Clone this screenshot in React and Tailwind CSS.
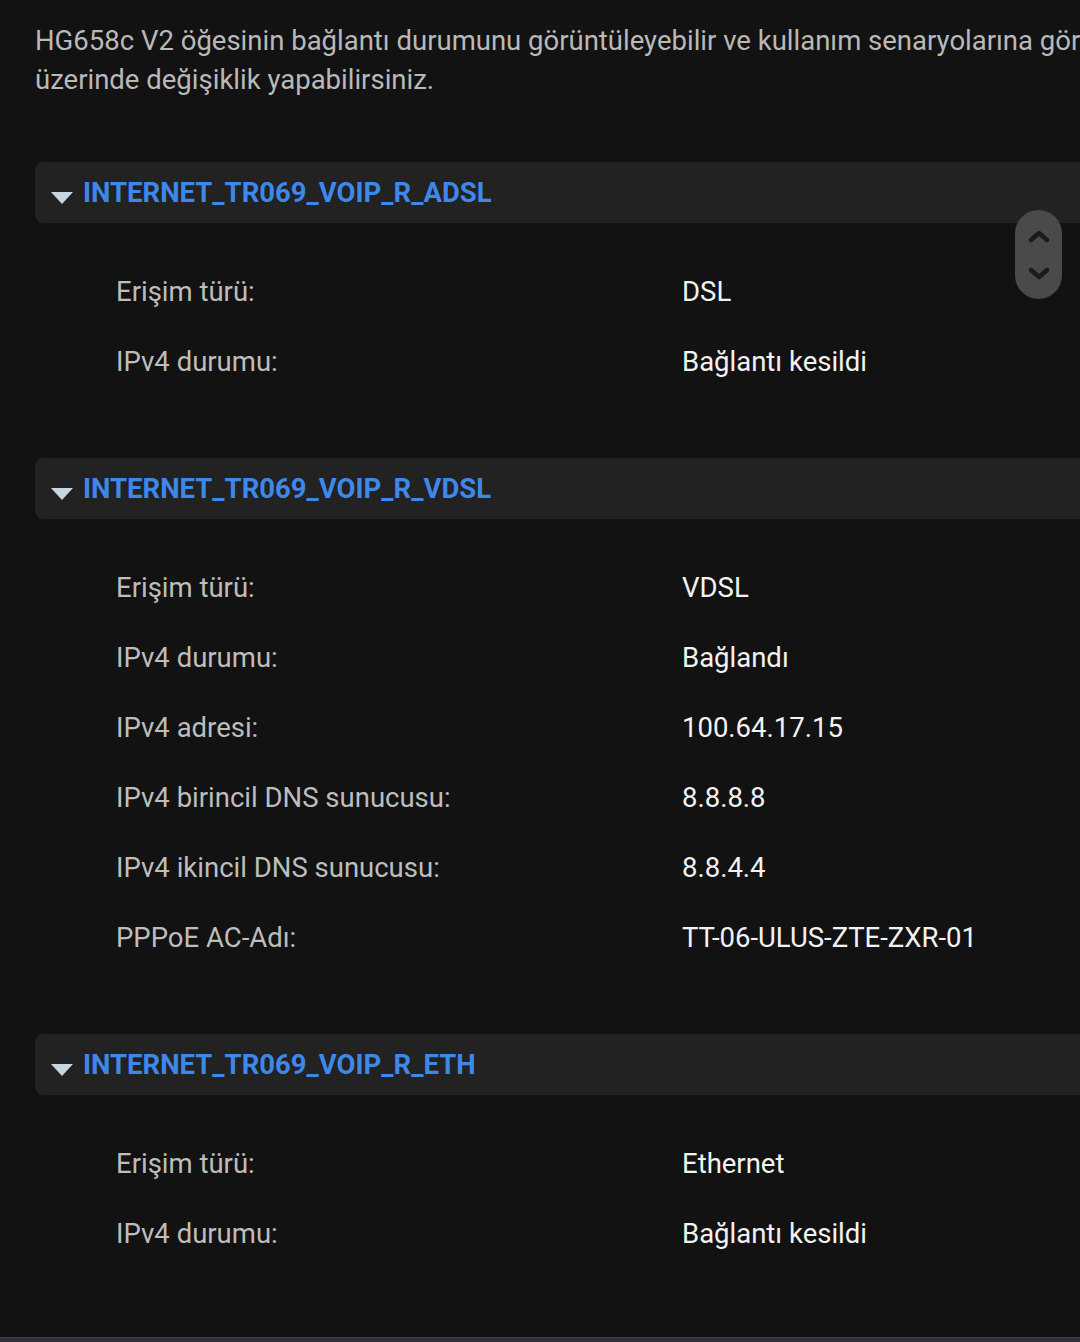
import React from "react";

const sections = [
  {
    title: "INTERNET_TR069_VOIP_R_ADSL",
    rows: [
      ["Erişim türü:", "DSL"],
      ["IPv4 durumu:", "Bağlantı kesildi"],
    ],
  },
  {
    title: "INTERNET_TR069_VOIP_R_VDSL",
    rows: [
      ["Erişim türü:", "VDSL"],
      ["IPv4 durumu:", "Bağlandı"],
      ["IPv4 adresi:", "100.64.17.15"],
      ["IPv4 birincil DNS sunucusu:", "8.8.8.8"],
      ["IPv4 ikincil DNS sunucusu:", "8.8.4.4"],
      ["PPPoE AC-Adı:", "TT-06-ULUS-ZTE-ZXR-01"],
    ],
  },
  {
    title: "INTERNET_TR069_VOIP_R_ETH",
    rows: [
      ["Erişim türü:", "Ethernet"],
      ["IPv4 durumu:", "Bağlantı kesildi"],
    ],
  },
];

function Section({ title, rows }) {
  return (
    <div className="mb-[29px]">
      <div className="h-[61px] rounded-[8px] bg-[#222222] flex items-center pl-[16px]">
        <svg width="22" height="13" viewBox="0 0 22 13" className="mt-[11px] mr-[10px] shrink-0">
          <polygon points="0,0 22,0 11,12" fill="#c9d6df" />
        </svg>
        <span className="text-[27.5px] font-bold text-[#3d88e9] whitespace-nowrap">
          {title}
        </span>
      </div>
      <div className="pt-[34px] pb-[32px]">
        {rows.map(([l, v]) => (
          <div key={l} className="h-[70px] flex items-center text-[27.5px]">
            <div className="w-[647px] pl-[81px] text-[#bdbdbd] whitespace-nowrap">{l}</div>
            <div className="text-[#f2f2f2] whitespace-nowrap">{v}</div>
          </div>
        ))}
      </div>
    </div>
  );
}

export default function App() {
  return (
    <div
      className="relative w-[1080px] h-[1342px] overflow-hidden bg-[#121212] flex flex-col"
      style={{ fontFamily: "Roboto, 'Noto Sans', sans-serif" }}
    >
      <div className="w-[1300px] pl-[35px] pt-[21px]">
        <p className="text-[27.5px] leading-[39px] text-[#b9b9b9] whitespace-nowrap">
          HG658c V2 öğesinin bağlantı durumunu görüntüleyebilir ve kullanım senaryolarına göre
          <br />
          üzerinde değişiklik yapabilirsiniz.
        </p>
        <div className="mt-[63px]">
          {sections.map((s) => (
            <Section key={s.title} {...s} />
          ))}
        </div>
      </div>
      <div className="mt-auto h-[5px] bg-[#2f3237] border-t border-[#3a3d42]" />
      <div className="absolute left-[1015px] top-[210px] w-[47px] h-[89px] rounded-full bg-[#4a4a4a] flex flex-col items-center justify-center gap-[24px]">
        <svg width="24" height="14" viewBox="0 0 24 14">
          <polyline points="4,11 12,4 20,11" fill="none" stroke="#1b1b1b" strokeWidth="4.5" strokeLinecap="round" strokeLinejoin="round" />
        </svg>
        <svg width="24" height="14" viewBox="0 0 24 14">
          <polyline points="4,3 12,10 20,3" fill="none" stroke="#1b1b1b" strokeWidth="4.5" strokeLinecap="round" strokeLinejoin="round" />
        </svg>
      </div>
    </div>
  );
}
